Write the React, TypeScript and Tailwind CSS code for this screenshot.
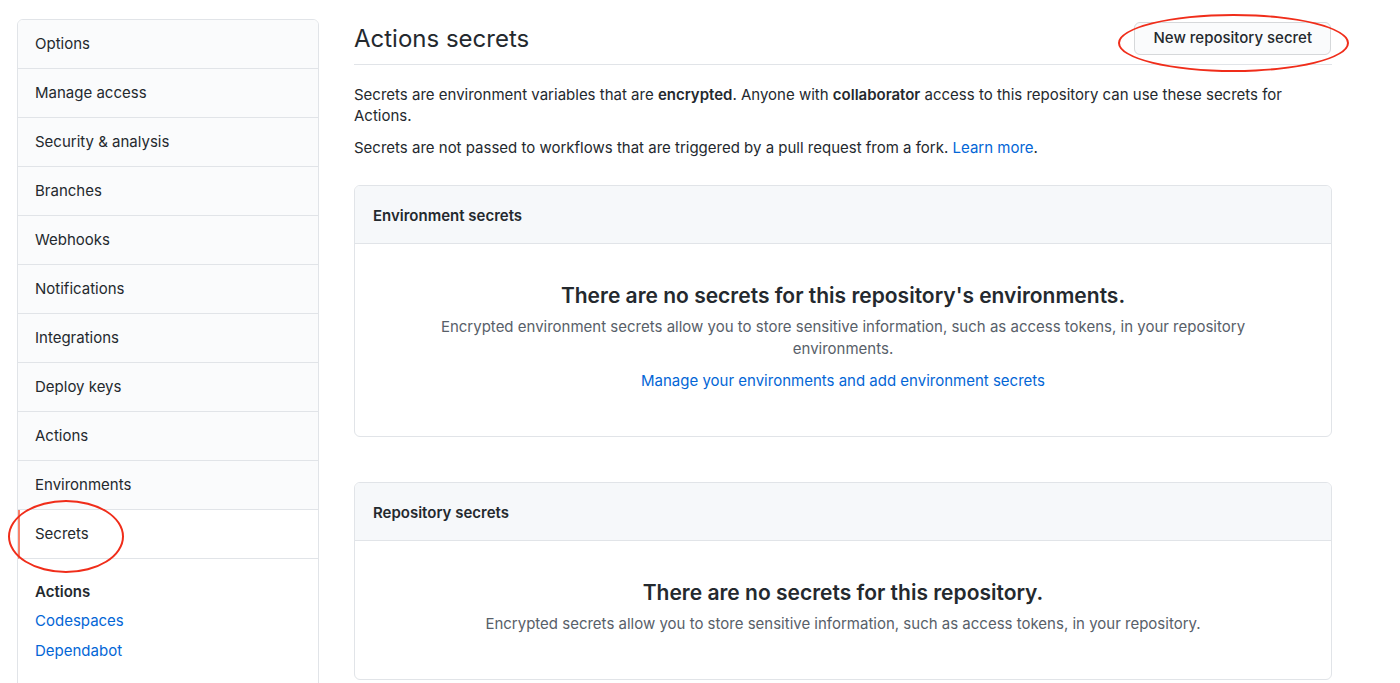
const menuItems = [
  'Options',
  'Manage access',
  'Security & analysis',
  'Branches',
  'Webhooks',
  'Notifications',
  'Integrations',
  'Deploy keys',
  'Actions',
  'Environments',
  'Secrets',
];

function Sidebar() {
  return (
    <nav className="w-[302px] shrink-0 rounded-t-[6px] border border-[#e1e4e8] overflow-hidden">
      {menuItems.map((item) => {
        const active = item === 'Secrets';
        return (
          <div
            key={item}
            className={
              active
                ? 'h-[49px] flex items-center pl-[15px] bg-white border-b border-[#e1e4e8] border-l-2 border-l-[#f9826c] text-[15px] text-[#24292e]'
                : 'h-[49px] flex items-center pl-[17px] bg-[#fafbfc] border-b border-[#e1e4e8] text-[15px] text-[#24292e]'
            }
          >
            {item}
          </div>
        );
      })}
      <div className="bg-white pl-[17px] pt-[21px] pb-[40px] text-[15px]">
        <div className="font-semibold text-[#24292e] leading-[24px]">Actions</div>
        <div className="text-[#0366d6] leading-[30px] mt-[2px]">Codespaces</div>
        <div className="text-[#0366d6] leading-[30px]">Dependabot</div>
      </div>
    </nav>
  );
}

function Box({
  header,
  title,
  children,
}: {
  header: string;
  title: string;
  children: React.ReactNode;
}) {
  return (
    <div className="border border-[#e1e4e8] rounded-[6px] overflow-hidden">
      <div className="h-[58px] flex items-center px-[18px] pt-[3px] bg-[#f6f8fa] border-b border-[#e1e4e8] text-[15px] font-semibold text-[#24292e]">
        {header}
      </div>
      <div className="flex flex-col items-center text-center px-[32px] pt-[38px]">
        <h3 className="text-[21px] leading-[28px] font-semibold text-[#24292e]">{title}</h3>
        {children}
      </div>
    </div>
  );
}

export default function App() {
  return (
    <div
      className="relative min-h-screen bg-white text-[#24292e] overflow-hidden"
      style={{ fontFamily: 'Inter, "Noto Sans", sans-serif' }}
    >
      <div className="flex gap-[35px] pt-[19px] pl-[17px]">
        <Sidebar />

        <main className="w-[978px] pt-[3px]">
          <div className="flex items-center justify-between pb-[9px] border-b border-[#e1e4e8]">
            <h2 className="text-[24px] leading-[33px] font-normal">Actions secrets</h2>
            <button className="h-[33px] px-[18px] mr-[1px] rounded-[6px] border border-[#d6d8da] bg-[#fafbfc] text-[15px] font-medium text-[#24292e]">
              New repository secret
            </button>
          </div>

          <p className="mt-[19px] text-[15px] leading-[21px]">
            Secrets are environment variables that are <strong className="font-semibold">encrypted</strong>. Anyone
            with <strong className="font-semibold">collaborator</strong> access to this repository can use these
            secrets for Actions.
          </p>
          <p className="mt-[11px] text-[15px] leading-[21px]">
            Secrets are not passed to workflows that are triggered by a pull request from a fork.{' '}
            <span className="text-[#0366d6]">Learn more</span>.
          </p>

          <div className="mt-[27px]">
            <Box header="Environment secrets" title="There are no secrets for this repository's environments.">
              <p className="mt-[6px] max-w-[840px] text-[15px] leading-[22px] text-[#586069]">
                Encrypted environment secrets allow you to store sensitive information, such as access tokens, in
                your repository environments.
              </p>
              <span className="mt-[10px] mb-[44px] text-[15px] leading-[22px] text-[#0366d6]">
                Manage your environments and add environment secrets
              </span>
            </Box>
          </div>

          <div className="mt-[45px]">
            <Box header="Repository secrets" title="There are no secrets for this repository.">
              <p className="mt-[6px] mb-[44px] text-[15px] leading-[22px] text-[#586069]">
                Encrypted secrets allow you to store sensitive information, such as access tokens, in your
                repository.
              </p>
            </Box>
          </div>
        </main>
      </div>

      {/* hand-drawn annotation circles */}
      <div className="absolute left-[1118px] top-[14px] w-[231px] h-[58px] rounded-[50%] border-2 border-[#f02d1a] pointer-events-none" />
      <div className="absolute left-[8px] top-[500px] w-[116px] h-[73px] rounded-[50%] border-2 border-[#f02d1a] pointer-events-none" />
    </div>
  );
}
